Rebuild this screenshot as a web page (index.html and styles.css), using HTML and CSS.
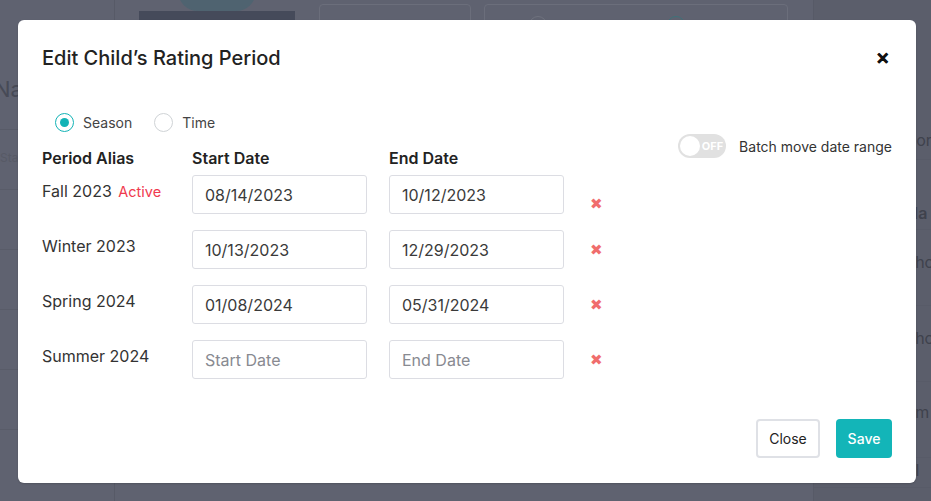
FILE: index.html
```html
<!DOCTYPE html>
<html>
<head>
<meta charset="utf-8">
<link rel="stylesheet" href="styles.css">
</head>
<body>
<div class="page">
  <div class="side">
    <div class="side-title">Na</div>
    <div class="side-row">Stat</div>
    <div class="side-row"></div>
    <div class="side-row"></div>
    <div class="side-row"></div>
    <div class="side-row"></div>
  </div>
  <div class="main">
    <div class="top">
      <div class="photo"><div class="avatar"></div><div class="photo-bar"></div></div>
      <div class="field f1"></div>
      <div class="field f2"><span class="ring"></span><span class="ring on"></span></div>
    </div>
  </div>
  <div class="right">
    <div class="r-row r1">Sort</div>
    <div class="r-row r2">Na</div>
    <div class="r-row r3">cho</div>
    <div class="r-row r4">cho</div>
    <div class="r-row r5">em</div>
    <div class="r-row r6">ol</div>
  </div>
</div>

<div class="overlay">
  <div class="modal">
    <div class="modal-head">
      <h2 class="modal-title">Edit Child’s Rating Period</h2>
      <span class="close-x">✕</span>
    </div>
    <div class="modal-body">
      <div class="left-col">
        <div class="radios">
          <label class="radio"><span class="dot checked"></span>Season</label>
          <label class="radio"><span class="dot"></span>Time</label>
        </div>
        <div class="grid">
          <div class="hd">Period Alias</div>
          <div class="hd">Start Date</div>
          <div class="hd">End Date</div>
          <div class="hd"></div>

          <div class="alias">Fall 2023 <span class="active">Active</span></div>
          <div class="input">08/14/2023</div>
          <div class="input">10/12/2023</div>
          <div class="del first">✖</div>

          <div class="alias">Winter 2023</div>
          <div class="input">10/13/2023</div>
          <div class="input">12/29/2023</div>
          <div class="del">✖</div>

          <div class="alias">Spring 2024</div>
          <div class="input">01/08/2024</div>
          <div class="input">05/31/2024</div>
          <div class="del">✖</div>

          <div class="alias">Summer 2024</div>
          <div class="input ph">Start Date</div>
          <div class="input ph">End Date</div>
          <div class="del">✖</div>
        </div>
      </div>
      <div class="right-col">
        <div class="toggle"><span class="knob"></span><span class="off">OFF</span></div>
        <span class="toggle-label">Batch move date range</span>
      </div>
    </div>
    <div class="modal-foot">
      <button class="btn btn-close">Close</button>
      <button class="btn btn-save">Save</button>
    </div>
  </div>
</div>
</body>
</html>
```
FILE: styles.css
```css
* { box-sizing: border-box; }
html, body { margin: 0; padding: 0; }
body {
  width: 931px;
  height: 501px;
  overflow: hidden;
  font-family: Inter, "Noto Sans", sans-serif;
  background: #5f6270;
  position: relative;
}

/* backdrop page */
.page {
  display: flex;
  height: 501px;
  color: #4a4d59;
}
.side {
  width: 115px;
  border-right: 1px solid #575a67;
}
.side-title {
  font-size: 22px;
  padding: 76px 0 0 0;
  height: 130px;
  text-indent: -6px;
  color: #474a56;
  border-bottom: 1px solid #585b68;
}
.side-row {
  height: 60px;
  border-bottom: 1px solid #595c69;
  font-size: 12px;
  color: #575a66;
  padding-top: 20px;
}
.main { flex: 1; padding: 0 24px; }
.top { display: flex; gap: 24px; align-items: flex-start; }
.photo { width: 156px; height: 60px; display: flex; flex-direction: column; align-items: center; }
.avatar { width: 78px; height: 20px; margin-top: -9px; border-radius: 0 0 40px 40px; background: #4f6370; }
.photo-bar { width: 156px; height: 40px; background: #454a5a; }
.field {
  margin-top: 4px;
  height: 40px;
  border: 1px solid #6b6e7b;
  border-radius: 4px;
  padding: 11px 14px;
}
.f1 { width: 152px; }
.f2 { width: 304px; margin-left: -11px; display: flex; gap: 10px; padding-left: 44px; }
.ring { width: 18px; height: 18px; border-radius: 50%; border: 1px solid #6f727e; display: inline-block; }
.ring.on { margin-left: 110px; border-color: #3e7279; }
.right {
  width: 118px;
  background: #5b5e6b;
  border-left: 1px solid #575a67;
  padding-top: 120px;
}
.r-row {
  border-bottom: 1px solid #585b68;
  font-size: 16px;
  line-height: 20px;
  color: #3f424d;
  padding-left: 92px;
  white-space: nowrap;
  overflow: hidden;
}
.r1 { height: 40px; padding-top: 10px; }
.r2 { height: 70px; padding-top: 43px; font-weight: 600; }
.r3 { height: 76px; padding-top: 22px; }
.r4 { height: 76px; padding-top: 22px; }
.r5 { height: 76px; padding-top: 20px; }
.r6 { height: 30px; padding-top: 2px; }

/* modal */
.overlay {
  position: absolute;
  inset: 0;
}
.modal {
  position: absolute;
  left: 18px;
  top: 20px;
  width: 898px;
  height: 463px;
  background: #fff;
  border-radius: 6px;
  box-shadow: 0 1px 2px rgba(0,0,0,0.15);
  display: flex;
  flex-direction: column;
}
.modal-head {
  display: flex;
  justify-content: space-between;
  align-items: center;
  padding: 26px 27px 0 24px;
}
.modal-title {
  margin: 0;
  font-size: 20px;
  font-weight: 500;
  color: #222;
  line-height: 24px;
}
.close-x {
  font-size: 16px;
  font-weight: 700;
  color: #111;
  -webkit-text-stroke: 0.6px #111;
}
.modal-body {
  display: flex;
  justify-content: space-between;
  padding: 0 24px 0 24px;
  flex: 1;
}
.radios {
  display: flex;
  gap: 22px;
  padding: 42px 0 0 13px;
  height: 88px;
}
.radio {
  display: flex;
  align-items: center;
  gap: 9px;
  font-size: 14px;
  color: #444;
  height: 20px;
}
.dot {
  width: 19px;
  height: 19px;
  border-radius: 50%;
  border: 1px solid #cfd3d6;
  display: inline-block;
  position: relative;
}
.dot.checked { border-color: #13b3b6; }
.dot.checked::after {
  content: "";
  position: absolute;
  left: 4px; top: 4px;
  width: 9px; height: 9px;
  border-radius: 50%;
  background: #13b3b6;
}
.grid {
  display: grid;
  grid-template-columns: 150px 197px 197px 40px;
  grid-template-rows: 17px 55px 55px 55px 55px;
}
.hd {
  font-size: 16px;
  font-weight: 600;
  color: #222;
  line-height: 17px;
  margin-top: -8px;
}
.alias {
  font-size: 16px;
  color: #333;
  padding-top: 6px;
}
.active { color: #f0394e; font-size: 14.5px; margin-left: 2px; }
.input {
  width: 175px;
  height: 39px;
  border: 1px solid #dcdde3;
  border-radius: 3px;
  font-size: 16px;
  color: #3a3a3a;
  padding: 9px 0 0 12px;
}
.input.ph { color: #888a91; }
.del {
  color: #f06d6d;
  font-size: 15px;
  padding: 10px 0 0 4px;
}
.del.first { padding-top: 19px; }
.right-col {
  display: flex;
  align-items: center;
  gap: 13px;
  height: 28px;
  margin-top: 62px;
}
.toggle {
  width: 48px;
  height: 24px;
  border-radius: 12px;
  background: #e1e1e1;
  position: relative;
}
.knob {
  position: absolute;
  left: 2px; top: 2px;
  width: 20px; height: 20px;
  border-radius: 50%;
  background: #fff;
}
.off {
  position: absolute;
  right: 3px;
  top: 5px;
  font-size: 11px;
  font-weight: 700;
  color: #fff;
  line-height: 14px;
}
.toggle-label {
  font-size: 14px;
  color: #333;
}
.modal-foot {
  display: flex;
  justify-content: flex-end;
  gap: 16px;
  padding: 0 24px 25px 0;
}
.btn {
  height: 39px;
  font-family: Inter, "Noto Sans", sans-serif;
  font-size: 14px;
  border-radius: 4px;
  cursor: pointer;
}
.btn-close {
  width: 64px;
  background: #fff;
  border: 2px solid #dfe1e6;
  color: #222;
}
.btn-save {
  width: 56px;
  background: #13b5b8;
  border: none;
  color: #fff;
  font-weight: 500;
}
```
